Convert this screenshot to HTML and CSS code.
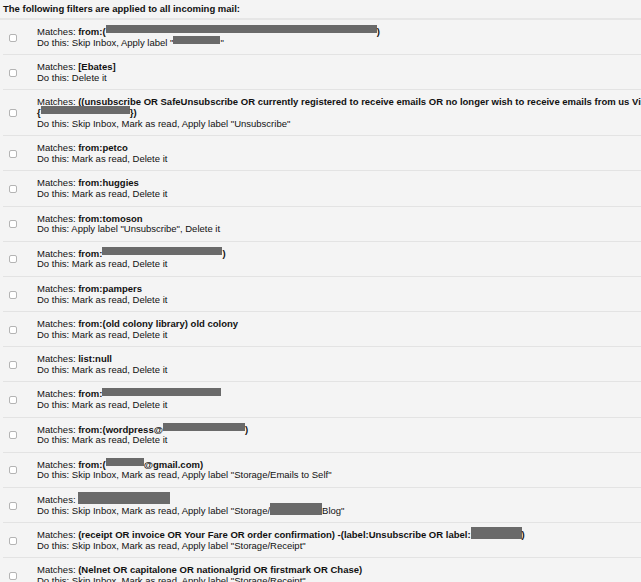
FILE: index.html
```html
<!DOCTYPE html>
<html>
<head>
<meta charset="utf-8">
<link rel="stylesheet" href="styles.css">
</head>
<body>
<div class="page">
  <div class="heading">The following filters are applied to all incoming mail:</div>
  <div class="filters">
    <div class="row">
      <div class="sel"><span class="cb"></span></div>
      <div class="desc">
        <div class="line">Matches: <b>from:(<span class="red" style="width:271px"></span>)</b></div>
        <div class="line">Do this: Skip Inbox, Apply label "<span class="red" style="width:47px"></span>"</div>
      </div>
    </div>
    <div class="row">
      <div class="sel"><span class="cb"></span></div>
      <div class="desc">
        <div class="line">Matches: <b>[Ebates]</b></div>
        <div class="line">Do this: Delete it</div>
      </div>
    </div>
    <div class="row">
      <div class="sel"><span class="cb"></span></div>
      <div class="desc">
        <div class="line">Matches: <b>((unsubscribe OR SafeUnsubscribe OR currently registered to receive emails OR no longer wish to receive emails from us Visit</b></div>
        <div class="line"><b>{<span class="red" style="width:89px"></span>})</b></div>
        <div class="line">Do this: Skip Inbox, Mark as read, Apply label "Unsubscribe"</div>
      </div>
    </div>
    <div class="row">
      <div class="sel"><span class="cb"></span></div>
      <div class="desc">
        <div class="line">Matches: <b>from:petco</b></div>
        <div class="line">Do this: Mark as read, Delete it</div>
      </div>
    </div>
    <div class="row">
      <div class="sel"><span class="cb"></span></div>
      <div class="desc">
        <div class="line">Matches: <b>from:huggies</b></div>
        <div class="line">Do this: Mark as read, Delete it</div>
      </div>
    </div>
    <div class="row">
      <div class="sel"><span class="cb"></span></div>
      <div class="desc">
        <div class="line">Matches: <b>from:tomoson</b></div>
        <div class="line">Do this: Apply label "Unsubscribe", Delete it</div>
      </div>
    </div>
    <div class="row">
      <div class="sel"><span class="cb"></span></div>
      <div class="desc">
        <div class="line">Matches: <b>from:<span class="red" style="width:120px"></span>)</b></div>
        <div class="line">Do this: Mark as read, Delete it</div>
      </div>
    </div>
    <div class="row">
      <div class="sel"><span class="cb"></span></div>
      <div class="desc">
        <div class="line">Matches: <b>from:pampers</b></div>
        <div class="line">Do this: Mark as read, Delete it</div>
      </div>
    </div>
    <div class="row">
      <div class="sel"><span class="cb"></span></div>
      <div class="desc">
        <div class="line">Matches: <b>from:(old colony library) old colony</b></div>
        <div class="line">Do this: Mark as read, Delete it</div>
      </div>
    </div>
    <div class="row">
      <div class="sel"><span class="cb"></span></div>
      <div class="desc">
        <div class="line">Matches: <b>list:null</b></div>
        <div class="line">Do this: Mark as read, Delete it</div>
      </div>
    </div>
    <div class="row">
      <div class="sel"><span class="cb"></span></div>
      <div class="desc">
        <div class="line">Matches: <b>from:<span class="red" style="width:119px"></span></b></div>
        <div class="line">Do this: Mark as read, Delete it</div>
      </div>
    </div>
    <div class="row">
      <div class="sel"><span class="cb"></span></div>
      <div class="desc">
        <div class="line">Matches: <b>from:(wordpress@<span class="red" style="width:82px"></span>)</b></div>
        <div class="line">Do this: Mark as read, Delete it</div>
      </div>
    </div>
    <div class="row">
      <div class="sel"><span class="cb"></span></div>
      <div class="desc">
        <div class="line">Matches: <b>from:(<span class="red" style="width:38px"></span>@gmail.com)</b></div>
        <div class="line">Do this: Skip Inbox, Mark as read, Apply label "Storage/Emails to Self"</div>
      </div>
    </div>
    <div class="row">
      <div class="sel"><span class="cb"></span></div>
      <div class="desc">
        <div class="line">Matches: <span class="red tall" style="width:92px"></span></div>
        <div class="line">Do this: Skip Inbox, Mark as read, Apply label "Storage/<span class="red tall" style="width:52px"></span>Blog"</div>
      </div>
    </div>
    <div class="row">
      <div class="sel"><span class="cb"></span></div>
      <div class="desc">
        <div class="line">Matches: <b>(receipt OR invoice OR Your Fare OR order confirmation) -(label:Unsubscribe OR label:<span class="red tall" style="width:51px"></span>)</b></div>
        <div class="line">Do this: Skip Inbox, Mark as read, Apply label "Storage/Receipt"</div>
      </div>
    </div>
    <div class="row">
      <div class="sel"><span class="cb"></span></div>
      <div class="desc">
        <div class="line">Matches: <b>(Nelnet OR capitalone OR nationalgrid OR firstmark OR Chase)</b></div>
        <div class="line">Do this: Skip Inbox, Mark as read, Apply label "Storage/Receipt"</div>
      </div>
    </div>
  </div>
</div>
</body>
</html>
```

FILE: styles.css
```css
html, body {
  margin: 0;
  padding: 0;
  background: #f4f4f4;
  overflow: hidden;
}

.page {
  font-family: "Liberation Sans", Arial, sans-serif;
  font-size: 9.5px;
  color: #111111;
  width: 641px;
  height: 582px;
  overflow: hidden;
}

.heading {
  font-weight: bold;
  line-height: 11px;
  padding: 3px 3px 4px 3px;
  white-space: nowrap;
}

.filters {
  border-top: 2px solid #e6e6e6;
}

.row {
  display: grid;
  grid-template-columns: 34px 1fr;
  align-items: center;
  margin-left: 3px;
  border-bottom: 1px solid #e3e3e3;
  padding: 7px 0 6px 0;
}

.sel {
  padding-left: 6px;
  display: flex;
  align-items: center;
}

.cb {
  display: block;
  width: 8px;
  height: 8px;
  box-sizing: border-box;
  border: 1px solid #b4b4b4;
  border-radius: 2px;
  background: #ffffff;
}

.desc {
  min-width: 0;
}

.line {
  line-height: 10.6px;
  height: 10.6px;
  white-space: nowrap;
}

.red {
  display: inline-block;
  height: 8px;
  margin: -2px 0 -2px 0;
  background: #6a6a6a;
  vertical-align: 3.7px;
}

.red.tall {
  height: 12px;
  margin: -4px 0 0 0;
  vertical-align: -1px;
}
```
